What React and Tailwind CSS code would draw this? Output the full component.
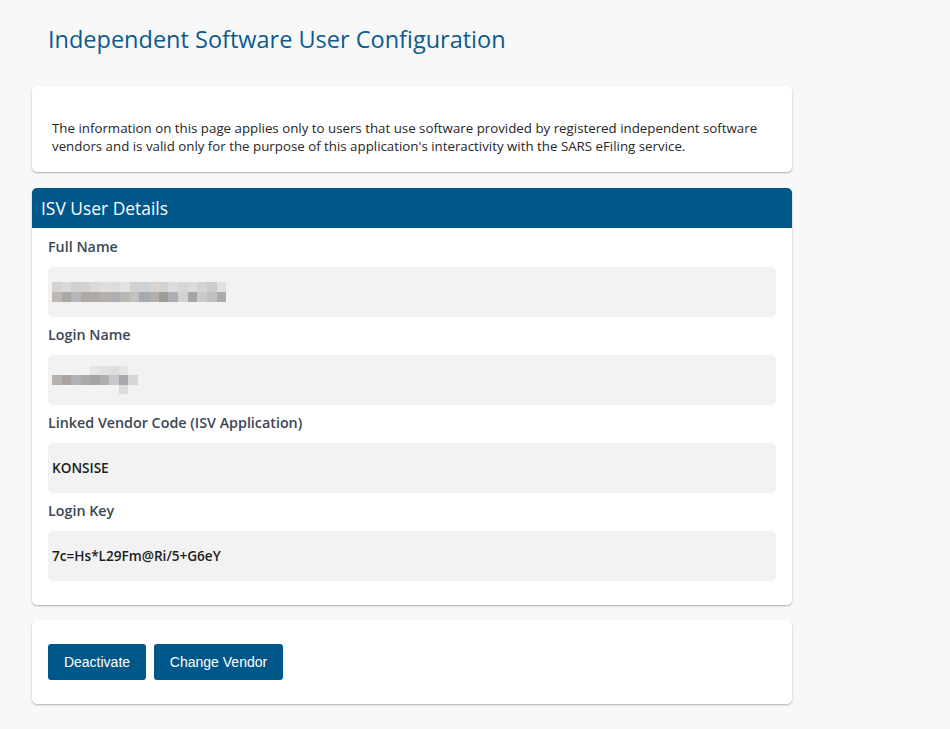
import React from "react";

// pixelated (redacted) values
const nameCells = [
  ["#d6d4d3", "#d9d9dc", "#d2d0cd", "#d5d3d1", "#dadad9", "#dedede", "#dcdcdc", "#e3e3e3", "#d2d2d2", "#cfd2d6", "#d7d4d2", "#d3d2d0", "#dcdbdd", "#d8d6d4", "#dddbdb", "#d5d4d2", "#cdcccb", "#e0e0e0"],
  ["#bdb8b3", "#aaa6a3", "#b4b6ba", "#aca8a5", "#aeaaa6", "#b5b0ac", "#b0aeb0", "#bab6b1", "#c4c1bc", "#a6a9ad", "#b3aeaa", "#9f9c9a", "#aeaeb2", "#d2d2cf", "#a4a4a9", "#c9c9c8", "#c3c1bf", "#aeaaa8"],
];
const loginCells = [
  ["#f2f2f2", "#f2f2f2", "#f2f2f2", "#f2f2f2", "#e6e6e6", "#e2e2e2", "#dcdddd", "#e6e6e6", "#f2f2f2"],
  ["#b7b3b1", "#a9a4a0", "#b1b0b2", "#acaaa9", "#a6a4a3", "#b0aeae", "#c6c9cc", "#a9a9ab", "#d6d6d6"],
  ["#f2f2f2", "#f2f2f2", "#f2f2f2", "#f2f2f2", "#f2f2f2", "#f2f2f2", "#f2f2f2", "#dcdcdc", "#f2f2f2"],
];

function Pixelated({ rows, cell = 9 }) {
  return (
    <div className="flex flex-col">
      {rows.map((row, i) => (
        <div key={i} className="flex">
          {row.map((c, j) => (
            <div key={j} style={{ background: c, width: cell, height: cell }} />
          ))}
        </div>
      ))}
    </div>
  );
}

function Field({ label, first, children }) {
  return (
    <div className="flex flex-col">
      <div className={`${first ? "h-[39px] pt-[8px]" : "h-[38px] pt-[7px]"} text-[14.3px] font-semibold text-[#3b4754]`}>{label}</div>
      <div className="h-[50px] rounded-[5px] bg-[#f2f2f2] px-[4px] flex items-center text-[13.6px] font-semibold text-[#1c1c1c]">
        {children}
      </div>
    </div>
  );
}

export default function App() {
  return (
    <div className="min-h-screen bg-[#f8f8f8] font-['Open_Sans','Noto_Sans',sans-serif] text-[#222]">
      <div className="w-[760px] ml-[32px] pt-[22px]">
        <h1 className="pl-[16px] h-[64px] text-[23.5px] text-[#0b5b8f] leading-[34px]">
          Independent Software User Configuration
        </h1>

        <div className="bg-white rounded-[5px] shadow-[0_1px_2px_rgba(0,0,0,0.3)] h-[86px] px-[20px] pt-[33px]">
          <p className="text-[13.3px] leading-[18px] text-[#262626]">
            The information on this page applies only to users that use software provided by registered independent software
            vendors and is valid only for the purpose of this application's interactivity with the SARS eFiling service.
          </p>
        </div>

        <div className="mt-[16px] bg-white rounded-[5px] shadow-[0_1px_2px_rgba(0,0,0,0.3)] overflow-hidden">
          <div className="h-[40px] bg-[#00578a] px-[9px] flex items-center text-[17.4px] text-white">
            ISV User Details
          </div>
          <div className="px-[16px] pb-[24px]">
            <Field label="Full Name" first>
              <Pixelated rows={nameCells} cell={9.7} />
            </Field>
            <Field label="Login Name">
              <Pixelated rows={loginCells} cell={9.5} />
            </Field>
            <Field label="Linked Vendor Code (ISV Application)">KONSISE</Field>
            <Field label="Login Key">7c=Hs*L29Fm@Ri/5+G6eY</Field>
          </div>
        </div>

        <div className="mt-[15px] bg-white rounded-[5px] shadow-[0_1px_2px_rgba(0,0,0,0.3)] h-[84px] px-[16px] flex items-center gap-[8px]">
          <button className="h-[36px] w-[98px] rounded-[3px] bg-[#00578a] text-white text-[14px] font-['Liberation_Sans',Arial,sans-serif]">
            Deactivate
          </button>
          <button className="h-[36px] w-[129px] rounded-[3px] bg-[#00578a] text-white text-[14px] font-['Liberation_Sans',Arial,sans-serif]">
            Change Vendor
          </button>
        </div>
      </div>
    </div>
  );
}
